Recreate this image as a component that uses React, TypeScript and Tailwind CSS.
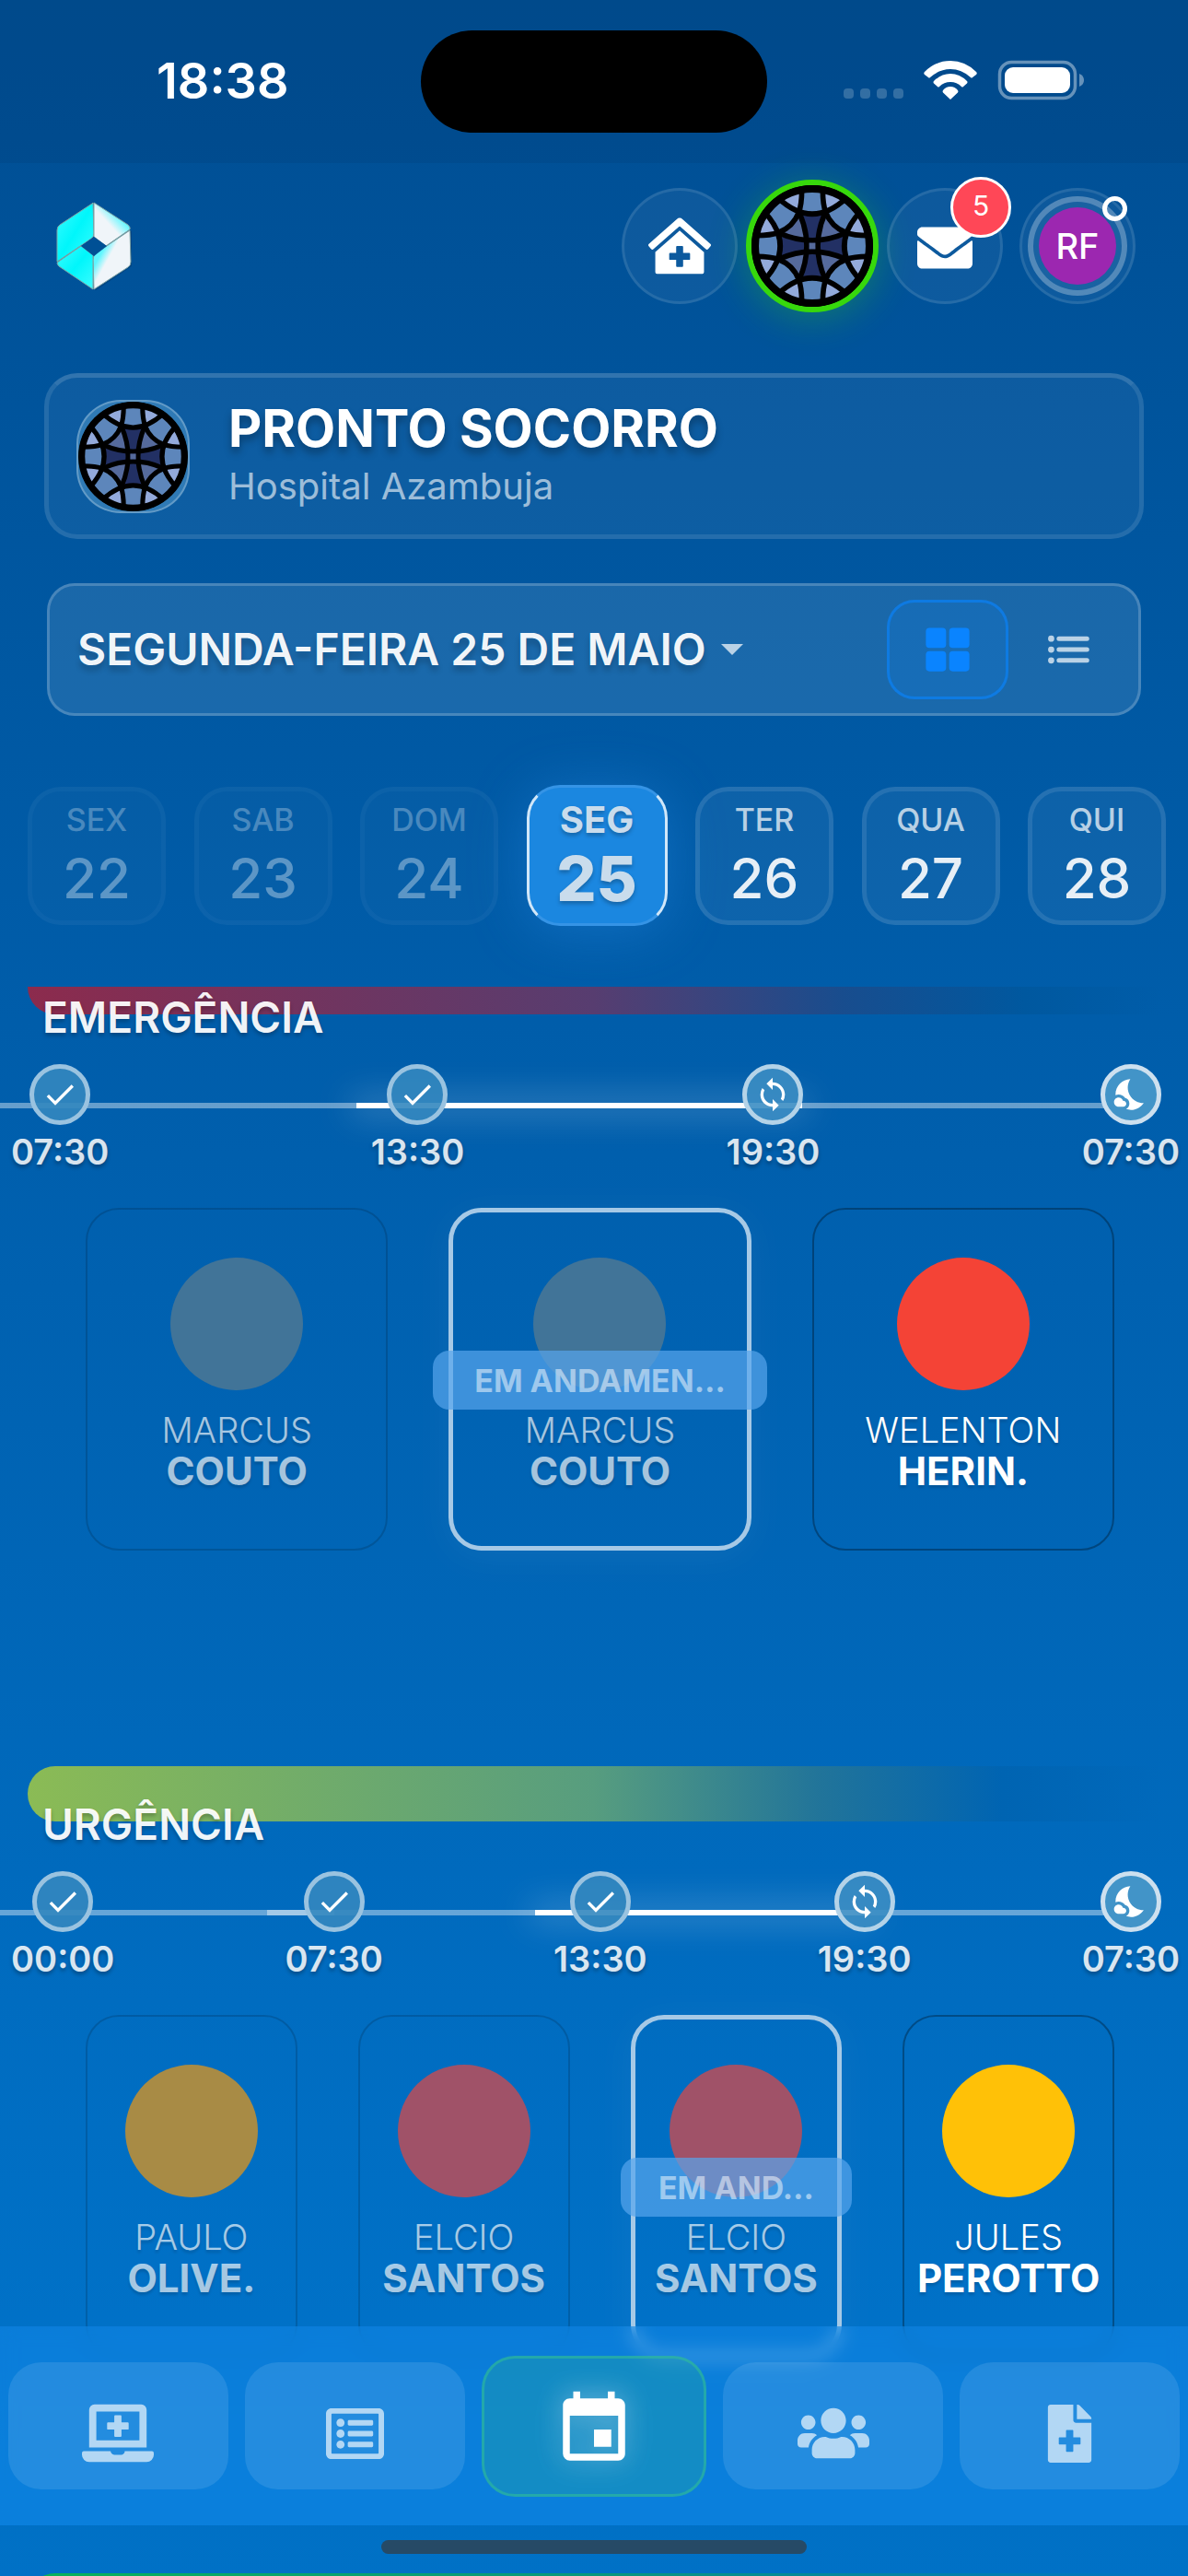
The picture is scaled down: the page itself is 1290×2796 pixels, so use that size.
import React from 'react';
import { FaClinicMedical, FaEnvelope, FaLaptopMedical, FaRegListAlt, FaUsers, FaFileMedical } from 'react-icons/fa';
import { IoGrid, IoList } from 'react-icons/io5';
import { MdCheck, MdSync, MdEvent, MdNightsStay } from 'react-icons/md';

interface Day {
  label: string;
  number: number;
  state: 'past' | 'selected' | 'next';
}

interface Stop {
  time: string;
  kind: 'done' | 'current' | 'night';
}

interface Shift {
  first: string;
  last: string;
  color: string;
  state: 'past' | 'running' | 'next';
  badge?: string;
}

interface Section {
  name: string;
  bar: string;
  stops: Stop[];
  current: number;
  shifts: Shift[];
}

const days: Day[] = [
  { label: 'SEX', number: 22, state: 'past' },
  { label: 'SAB', number: 23, state: 'past' },
  { label: 'DOM', number: 24, state: 'past' },
  { label: 'SEG', number: 25, state: 'selected' },
  { label: 'TER', number: 26, state: 'next' },
  { label: 'QUA', number: 27, state: 'next' },
  { label: 'QUI', number: 28, state: 'next' }
];

const sections: Section[] = [
  {
    name: 'EMERGÊNCIA',
    bar: 'bg-[linear-gradient(90deg,#8c2b4d,#573d70_50%,#184d8e_72%,#00589f_88%,transparent)]',
    stops: [
      { time: '07:30', kind: 'done' },
      { time: '13:30', kind: 'done' },
      { time: '19:30', kind: 'current' },
      { time: '07:30', kind: 'night' }
    ],
    current: 1,
    shifts: [
      { first: 'MARCUS', last: 'COUTO', color: 'bg-[#417498]', state: 'past' },
      { first: 'MARCUS', last: 'COUTO', color: 'bg-[#417498]', state: 'running', badge: 'EM ANDAMEN…' },
      { first: 'WELENTON', last: 'HERIN.', color: 'bg-[#f44336]', state: 'next' }
    ]
  },
  {
    name: 'URGÊNCIA',
    bar: 'bg-[linear-gradient(90deg,#8bbb55,#579d7f_50%,#21749a_70%,#0064b2_86%,transparent)]',
    stops: [
      { time: '00:00', kind: 'done' },
      { time: '07:30', kind: 'done' },
      { time: '13:30', kind: 'done' },
      { time: '19:30', kind: 'current' },
      { time: '07:30', kind: 'night' }
    ],
    current: 2,
    shifts: [
      { first: 'PAULO', last: 'OLIVE.', color: 'bg-[#a88b45]', state: 'past' },
      { first: 'ELCIO', last: 'SANTOS', color: 'bg-[#a05268]', state: 'past' },
      { first: 'ELCIO', last: 'SANTOS', color: 'bg-[#a05268]', state: 'running', badge: 'EM AND…' },
      { first: 'JULES', last: 'PEROTTO', color: 'bg-[#ffc107]', state: 'next' }
    ]
  }
];

const quarters = [0, 90, 180, 270];

const Rosette = ({ className }: { className: string }) => (
  <svg viewBox="-197 -197 394 394" className={className} aria-hidden="true">
    <circle r="197" fill="#000" />
    <circle r="176" fill="#5d86bb" />
    {/* Glass panes */}
    {quarters.map(angle => (
      <g key={angle} transform={`rotate(${angle})`}>
        <path d="M0 0 L-40 -108 Q-60 -60 -108 -40Z" fill="#556a9c" />
        <path d="M-34 -175 Q-36 -140 -40 -108 Q-75 -122 -110 -155 Q-75 -172 -34 -175Z" fill="#93aadb" />
        <path d="M34 -175 Q36 -140 40 -108 Q75 -122 110 -155 Q75 -172 34 -175Z" fill="#93aadb" />
      </g>
    ))}
    {quarters.map(angle => (
      <path key={angle} transform={`rotate(${angle})`} d="M-40 -108 Q0 -96 40 -108 Q17 -54 17 0 L-17 0 Q-17 -54 -40 -108Z" fill="#223064" />
    ))}
    {/* Lead lines */}
    <g fill="none" stroke="#000" strokeWidth="17">
      <circle r="184" strokeWidth="22" />
      {quarters.map(angle => (
        <g key={angle} transform={`rotate(${angle})`}>
          <path d="M-34 -180 Q-34 -135 -44 -108 Q-62 -62 -108 -44 Q-135 -34 -180 -34" />
          <path d="M-110 -155 Q0 -53 110 -155" />
          <path d="M-42 -108 Q6 0 -42 108" />
        </g>
      ))}
    </g>
    <rect x="-10" y="-10" width="20" height="20" fill="#556a9c" />
  </svg>
);

const Logo = () => (
  <svg viewBox="0 0 84 96" className="h-24 w-[84px]" role="img" aria-label="Início">
    <defs>
      <linearGradient id="logo-cyan" x1="0" y1="0" x2="1" y2="1">
        <stop offset="0" stopColor="#3dfcff" />
        <stop offset="0.5" stopColor="#00f6fb" />
        <stop offset="1" stopColor="#3dfcff" />
      </linearGradient>
      <linearGradient id="logo-white" x1="0.2" y1="0.8" x2="0.7" y2="0.25">
        <stop offset="0.5" stopColor="#f0f5f9" />
        <stop offset="0.9" stopColor="#6ff7ff" />
      </linearGradient>
      <linearGradient id="logo-white-low" x1="0.2" y1="0.3" x2="0.55" y2="0.6">
        <stop offset="0.15" stopColor="#5ff6ff" />
        <stop offset="0.6" stopColor="#f0f5f9" />
      </linearGradient>
    </defs>
    <path d="M43 97 L83 70 L83 32 L44 6Z" fill="#003a70" opacity="0.5" />
    <g stroke="#7fa3a5" strokeWidth="1" strokeLinejoin="round">
      <path d="M41 1 L42 34 Q42 38 39 40 L2 65 L2 31 Q2 27 5 25 L40 2Z" fill="url(#logo-cyan)" />
      <path d="M42 1 L79 25 Q82 28 81 30 L55 48 L42 38Z" fill="url(#logo-white)" />
      <path d="M81 31 L82 65 Q82 69 79 71 L42 95 L41 63 Q41 59 44 56Z" fill="url(#logo-white-low)" />
      <path d="M2 66 L28 48 L41 58 L41 95 L4 70 Q2 68 2 66Z" fill="url(#logo-cyan)" />
    </g>
    <path d="M42 38 L56 48 L42 59 L28 48Z" fill="#005095" />
  </svg>
);

const StatusBar = () => (
  <div className="grid h-[177px] grid-cols-[1fr_auto_1fr] items-start bg-black/5 pt-[33px]">
    <span className="flex h-[108px] items-center pl-[170px] text-[54px] font-semibold text-white">18:38</span>
    <div className="h-[111px] w-[376px] rounded-full bg-black" />
    <svg viewBox="0 0 262 60" className="mt-[29px] mr-[112px] h-[60px] w-[262px] justify-self-end" aria-label="Wi-Fi e bateria" role="img">
      <g fill="#fff" fillOpacity="0.2">
        <rect x="0" y="34" width="11" height="11" rx="4" />
        <rect x="18" y="34" width="11" height="11" rx="4" />
        <rect x="36" y="34" width="11" height="11" rx="4" />
        <rect x="54" y="34" width="11" height="11" rx="4" />
      </g>
      <g fill="#fff">
        <path d="M88 16 Q100 4 116 4 Q132 4 144 16 Q145.500 17.500 144 19 L140 22 Q139 23 138 22 Q128 13 116 13 Q104 13 94 22 Q93 23 92 22 L88 19 Q86.500 17.500 88 16Z" />
        <path d="M98 26 Q106 18 116 18 Q126 18 134 26 Q135 27 134 28.500 L130 32 Q129 33 128 32 Q123 27 116 27 Q109 27 104 32 Q103 33 102 32 L98 28.500 Q97 27 98 26Z" />
        <path d="M108 36 Q111 32 116 32 Q121 32 124 36 Q125 37 124 38.500 L116 46 L108 38.500 Q107 37 108 36Z" />
      </g>
      <rect x="169.500" y="5.500" width="82" height="39" rx="13" fill="none" stroke="#fff" strokeOpacity="0.4" strokeWidth="3.500" />
      <rect x="175" y="11" width="71" height="28" rx="9" fill="#fff" />
      <path d="M256 18 Q261 20 261 25 Q261 30 256 32Z" fill="#fff" fillOpacity="0.4" />
    </svg>
  </div>
);

const Header = () => (
  <header className="flex items-center justify-between pt-[18px] pr-[57px] pl-[60px]">
    <a href="#inicio">
      <Logo />
    </a>
    <div className="flex items-center gap-[9px]">
      <button aria-label="Unidade" className="flex size-[126px] items-center justify-center rounded-full border-3 border-white/10 bg-white/5">
        <FaClinicMedical className="size-[68px] text-white" />
      </button>
      <button aria-label="Hospital" className="size-36 rounded-full border-6 border-[#37d80c] bg-black shadow-[0_6px_42px_rgba(55,216,12,0.3)]">
        <Rosette className="size-full" />
      </button>
      <button aria-label="Mensagens" className="relative flex size-[126px] items-center justify-center rounded-full border-3 border-white/10 bg-white/5 pt-1">
        <FaEnvelope className="size-[60px] text-white" />
        <span className="absolute -top-[15px] -right-3 flex size-[66px] items-center justify-center rounded-full border-3 border-white bg-[#ff4757] pb-1 text-[30px] text-white">
          5
        </span>
      </button>
      <button aria-label="Perfil" className="relative ml-[9px] flex size-[126px] items-center justify-center rounded-full border-3 border-white/10 bg-white/5">
        <span className="flex size-[108px] items-center justify-center rounded-full border-6 border-white/25 bg-white/5">
          <span className="flex size-[84px] items-center justify-center rounded-full bg-[#9c27b0] text-[38px] font-medium text-white">RF</span>
        </span>
        <span className="absolute top-[6px] right-[6px] size-[27px] rounded-full border-5 border-white" />
      </button>
    </div>
  </header>
);

const DayTile = ({ day }: { day: Day }) => {
  if (day.state === 'selected') {
    return (
      <button className="flex size-[153px] flex-col items-center justify-center rounded-[36px] border-3 border-x-white/80 border-y-[#3594e6] bg-[#1b87e0] text-[#c9dcec] shadow-[0_6px_60px_rgba(40,140,230,0.4)] text-shadow-[0_3px_4px_rgba(0,0,0,0.25)]">
        <span className="text-[40px] leading-[48px] font-bold">{day.label}</span>
        <span className="text-[68px] leading-[78px] font-extrabold">{day.number}</span>
      </button>
    );
  }
  return (
    <button
      className={`flex size-[150px] flex-col items-center justify-center rounded-[36px] border-5 bg-white/5 text-white ${
        day.state === 'past' ? 'border-white/8 opacity-40' : 'border-white/10'
      }`}
    >
      <span className="text-[34px] leading-[48px] font-medium opacity-70">{day.label}</span>
      <span className="text-[60px] leading-[78px] font-medium opacity-90">{day.number}</span>
    </button>
  );
};

const StopIcon = ({ kind }: { kind: Stop['kind'] }) => {
  if (kind === 'done') return <MdCheck className="size-10" />;
  if (kind === 'current') return <MdSync className="size-10" />;
  return <MdNightsStay className="size-10" />;
};

const stopColors = {
  done: 'border-[#9ac3e0] bg-[#3387bf]/90',
  current: 'border-[#b4d3e8] bg-[#3b8dc3]/90',
  night: 'border-[#cde0ef] bg-[#4294c8]'
};

const Timeline = ({ stops, current }: { stops: Stop[]; current: number }) => {
  const steps = stops.length - 1;

  return (
    <div className="relative mt-[27px] flex justify-between pr-[9px] pl-3">
      <div className="absolute top-[42px] right-[62px] left-0 h-[6px] bg-white/40" />
      {current > 1 && (
        <div
          className="absolute top-[42px] h-[6px] bg-white/40"
          style={{ left: `${((current - 1) * 90) / steps}%`, width: `${22.5 / steps}%` }}
        />
      )}
      <div
        className="absolute top-[42px] h-[6px] bg-white shadow-[0_0_36px_6px_rgba(255,255,255,0.25)]"
        style={{ left: `${(current * 90) / steps}%`, width: `${112.5 / steps}%` }}
      />
      {stops.map((stop, i) => (
        <div key={i} className="relative flex flex-col items-center">
          <span className={`flex size-[66px] items-center justify-center rounded-full border-5 text-white ${stopColors[stop.kind]}`}>
            <StopIcon kind={stop.kind} />
          </span>
          <span className="text-[38px] leading-[58px] font-semibold text-white/85 text-shadow-[0_3px_4px_rgba(0,0,0,0.3)]">{stop.time}</span>
        </div>
      ))}
    </div>
  );
};

const cardStyles = {
  past: 'border-2 border-black/15 pt-[52px]',
  running: 'border-5 border-[#a6c9e6] pt-[49px] shadow-[0_6px_40px_rgba(255,255,255,0.05)]',
  next: 'border-2 border-black/30 pt-[52px]'
};

const ShiftCard = ({ shift }: { shift: Shift }) => (
  <div className={`relative flex h-[372px] min-w-0 flex-col items-center rounded-[36px] ${cardStyles[shift.state]}`}>
    <div className={`size-36 rounded-full ${shift.color}`} />
    <div className={`pt-5 text-center text-shadow-[0_3px_3px_rgba(0,0,0,0.15)] ${shift.state === 'next' ? 'text-white' : 'text-white/65'}`}>
      <p className="text-[38px] leading-[46px] font-light">{shift.first}</p>
      <p className="text-[42px] leading-[44px] font-bold">{shift.last}</p>
    </div>
    {shift.badge && (
      <span className="absolute top-[150px] -left-[7%] flex h-16 w-[114%] items-center justify-center rounded-[18px] bg-[#57a5ec]/70 text-[34px] font-bold text-white/50">
        {shift.badge}
      </span>
    )}
  </div>
);

const SectionBlock = ({ section }: { section: Section }) => (
  <section className="h-[876px]">
    <div className={`mx-[30px] h-[60px] rounded-l-full ${section.bar}`} />
    <h2 className="-mt-[21px] pl-[46px] text-[46px] leading-[48px] font-semibold text-white/95 text-shadow-[0_3px_4px_rgba(0,0,0,0.25)]">
      {section.name}
    </h2>
    <Timeline stops={section.stops} current={section.current} />
    <div className="mt-[32px] grid auto-cols-fr grid-flow-col gap-[66px] pr-20 pl-[93px]">
      {section.shifts.map((shift, i) => (
        <ShiftCard key={i} shift={shift} />
      ))}
    </div>
  </section>
);

const navItems = [
  { label: 'Plantões', icon: FaLaptopMedical, size: 'size-[78px]' },
  { label: 'Lista', icon: FaRegListAlt, size: 'size-[63px]' },
  { label: 'Escala', icon: MdEvent, size: 'size-[90px]', active: true },
  { label: 'Equipe', icon: FaUsers, size: 'size-[78px]' },
  { label: 'Documentos', icon: FaFileMedical, size: 'size-[63px]' }
];

const BottomNav = () => (
  <div className="absolute inset-x-0 bottom-0">
    <nav className="flex h-[216px] items-center gap-[18px] bg-[#1890f5]/40 px-[9px] backdrop-blur-[9px]">
      {navItems.map(({ label, icon: Icon, size, active }) => (
        <button
          key={label}
          aria-label={label}
          className={`flex flex-1 items-center justify-center rounded-[36px] ${
            active
              ? 'h-[153px] border-3 border-[#34c48f]/50 bg-[#26a69a]/35 pt-2 text-white'
              : 'h-[138px] bg-white/10 pt-4 text-white/65'
          }`}
        >
          <Icon className={active ? `${size} drop-shadow-[0_0_15px_rgba(255,255,255,0.4)]` : size} />
        </button>
      ))}
    </nav>
    <div className="flex h-[55px] justify-center bg-black/3 pt-4">
      <div className="h-[15px] w-[462px] rounded-full bg-[#264a66]" />
    </div>
  </div>
);

const App = () => (
  <div className="relative flex h-screen flex-col overflow-hidden bg-linear-to-b from-[#004e93] via-[#0061b0] to-[#0075cd] font-['Inter','Liberation_Sans',sans-serif]">
    <StatusBar />
    <Header />

    {/* Sector */}
    <div className="mx-12 mt-[66px] flex h-[180px] items-center gap-[42px] rounded-[36px] border-5 border-white/10 border-t-white/15 bg-white/5 pl-[30px]">
      <div className="size-[123px] rounded-[48px] border-2 border-white/25 bg-[#2f7ab5]">
        <Rosette className="size-full" />
      </div>
      <div>
        <h1 className="text-[56px] leading-[66px] font-bold text-white text-shadow-[0_6px_9px_rgba(0,0,0,0.3)]">PRONTO SOCORRO</h1>
        <p className="text-[40px] leading-[60px] text-white/60">Hospital Azambuja</p>
      </div>
    </div>

    {/* Date and view mode */}
    <div className="mx-[51px] mt-12 flex h-36 items-center justify-between rounded-[30px] border-3 border-white/20 bg-white/10 pr-3 pl-[30px]">
      <button className="flex items-center gap-4 text-[48px] font-semibold text-white/95 text-shadow-[0_6px_6px_rgba(0,0,0,0.2)]">
        SEGUNDA-FEIRA 25 DE MAIO
        <svg viewBox="0 0 24 12" className="h-3 w-6 fill-white/70" aria-hidden="true">
          <path d="M0 0h24L12 12z" />
        </svg>
      </button>
      <div className="flex">
        <button aria-label="Grade" className="flex h-[108px] w-[132px] items-center justify-center rounded-[30px] border-3 border-[#0a84ff]/60 bg-[#0a84ff]/15">
          <IoGrid className="size-[54px] text-[#0a84ff]" />
        </button>
        <button aria-label="Lista" className="flex h-[108px] w-[129px] items-center justify-center text-white/70">
          <IoList className="size-[54px]" />
        </button>
      </div>
    </div>

    <div className="mt-[75px] flex shrink-0 items-center justify-between pr-6 pl-[30px]">
      {days.map(day => (
        <DayTile key={day.number} day={day} />
      ))}
    </div>

    <main className="mt-[66px] min-h-0 flex-1 overflow-hidden">
      <div className="-mt-[30px]">
        {sections.map(section => (
          <SectionBlock key={section.name} section={section} />
        ))}
        <div className="mx-[30px] h-[60px] rounded-l-full bg-linear-to-r from-[#0cb85c] via-[#0a9c80] to-transparent" />
      </div>
    </main>

    <BottomNav />
  </div>
);

export default App;
